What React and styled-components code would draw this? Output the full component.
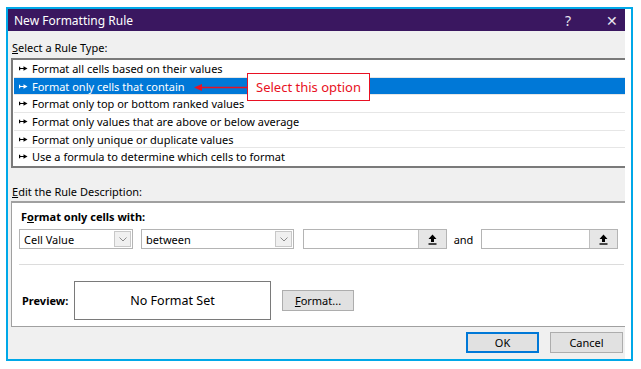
import React from 'react'
import styled, { createGlobalStyle } from 'styled-components'

const Global = createGlobalStyle`
  html, body {
    margin: 0;
    background: #ffffff;
  }
  body {
    font-family: "Noto Sans", "Open Sans", sans-serif;
    font-size: 11px;
    color: #000;
  }
`

const Frame = styled.div`
  margin: 7px 0 0 6px;
  width: 627px;
  height: 354px;
  box-sizing: border-box;
  border: 2px solid #00a8e8;
  display: flex;
`

const Dialog = styled.div`
  width: 617px;
  height: 100%;
  background: #f0f0f0;
  display: flex;
  flex-direction: column;
`

const TitleBar = styled.div`
  height: 22px;
  flex: none;
  background: #3a1760;
  color: #fff;
  display: flex;
  align-items: center;
  padding: 0 0 0 6px;
  font-size: 12px;
`

const Title = styled.span`
  flex: 1;
`

const TitleButton = styled.span`
  width: ${p => p.$w}px;
  margin-left: ${p => p.$ml || 0}px;
  text-align: center;
  font-size: 14px;
  color: #e8e4ee;
`

const Body = styled.div`
  flex: 1;
  display: flex;
  flex-direction: column;
  padding-left: 3px;
`

const Label = styled.div`
  height: 14px;
  line-height: 14px;
  padding-left: 1px;
  margin: ${p => p.$top}px 0 ${p => p.$bottom}px;
  u { text-decoration: underline; }
`

const ListBox = styled.div`
  height: 110px;
  box-sizing: border-box;
  border: 2px solid #7a7a7a;
  border-right: none;
  background: #fff;
  display: flex;
  flex-direction: column;
  padding-left: 1px;
  position: relative;
`

const Row = styled.div`
  flex: 1;
  display: flex;
  align-items: center;
  gap: 4px;
  padding-left: 5px;
  border-bottom: 1px solid ${p => (p.$last ? 'transparent' : '#e6e6e6')};
  background: ${p => (p.$selected ? '#0078d7' : 'transparent')};
  color: ${p => (p.$selected ? '#fff' : '#000')};
  white-space: nowrap;
`

const Callout = styled.div`
  position: absolute;
  left: 181px;
  top: 13px;
  display: flex;
  align-items: center;
`

const CalloutBox = styled.div`
  width: 123px;
  height: 28px;
  box-sizing: border-box;
  border: 1px solid #e81123;
  background: #fff;
  color: #e81123;
  font-size: 13px;
  display: flex;
  align-items: center;
  justify-content: center;
`

const DescBox = styled.div`
  height: 126px;
  box-sizing: border-box;
  border: 1px solid #a0a0a0;
  border-top: 2px solid #a0a0a0;
  border-right: none;
  background: #fff;
  display: flex;
  flex-direction: column;
`

const DescHead = styled.div`
  font-weight: bold;
  padding: 7px 0 0 9px;
  height: 14px;
  line-height: 14px;
  u { text-decoration: underline; }
`

const Controls = styled.div`
  display: flex;
  align-items: center;
  margin: 5px 0 0 7px;
  height: 20px;
  padding-bottom: 15px;
  border-bottom: 1px solid #dcdcdc;
  width: 605px;
`

const Combo = styled.div`
  width: ${p => p.$w}px;
  height: 20px;
  box-sizing: border-box;
  border: 1px solid #b4b4b4;
  background: #fff;
  display: flex;
  align-items: center;
  margin-right: ${p => p.$gap}px;
`

const ComboText = styled.span`
  flex: 1;
  padding-left: 4px;
`

const ComboButton = styled.span`
  width: 17px;
  height: 16px;
  margin-right: 1px;
  box-sizing: border-box;
  border: 1px solid #c8c8c8;
  background: #f0f0f0;
  display: flex;
  align-items: center;
  justify-content: center;
`

const RefButton = styled.span`
  width: 28px;
  height: 18px;
  box-sizing: border-box;
  border-left: 1px solid #c0c0c0;
  background: #e6e6e6;
  display: flex;
  align-items: center;
  justify-content: center;
`

const And = styled.span`
  width: 33px;
  text-align: center;
  margin-right: 1px;
`

const PreviewRow = styled.div`
  display: flex;
  align-items: center;
  padding: 16px 0 0 10px;
`

const PreviewLabel = styled.span`
  font-weight: bold;
  width: 52px;
`

const PreviewBox = styled.div`
  width: 197px;
  height: 39px;
  box-sizing: border-box;
  border: 1px solid #7a7a7a;
  display: flex;
  align-items: center;
  justify-content: center;
  font-size: 12.5px;
  margin-right: 11px;
`

const Button = styled.button`
  width: ${p => p.$w}px;
  height: 21px;
  box-sizing: border-box;
  border: 1px solid ${p => (p.$primary ? '#0078d7' : '#adadad')};
  box-shadow: ${p => (p.$primary ? 'inset 0 0 0 1px #0078d7' : 'none')};
  background: #e1e1e1;
  font-family: inherit;
  font-size: 11px;
  color: #000;
  padding: 0;
  u { text-decoration: underline; }
`

const Footer = styled.div`
  display: flex;
  justify-content: flex-end;
  gap: 11px;
  padding: 5px 2px 0 0;
`

const Pointer = () => (
  <svg width="9" height="7" viewBox="0 0 9 7">
    <path d="M0.6 1.8v3.4M0.6 3.5H5" stroke="currentColor" strokeWidth="1.2" />
    <path d="M4.5 1.2L8.5 3.5L4.5 5.8Z" fill="currentColor" />
  </svg>
)

const Chevron = () => (
  <svg width="8" height="5" viewBox="0 0 8 5">
    <path d="M0.5 0.5L4 4L7.5 0.5" stroke="#8a8a8a" strokeWidth="1" fill="none" />
  </svg>
)

const UpArrow = () => (
  <svg width="9" height="11" viewBox="0 0 9 11">
    <path d="M4.5 0.5L8.5 5H6V8H3V5H0.5Z" fill="#000" />
    <path d="M0.5 10H8.5" stroke="#000" strokeWidth="1.4" />
  </svg>
)

const CalloutArrow = () => (
  <svg width="53" height="9" viewBox="0 0 53 9">
    <path d="M6 4.5H53" stroke="#e81123" strokeWidth="1.6" />
    <path d="M0 4.5L8 1V8Z" fill="#e81123" />
  </svg>
)

const rules = [
  'Format all cells based on their values',
  'Format only cells that contain',
  'Format only top or bottom ranked values',
  'Format only values that are above or below average',
  'Format only unique or duplicate values',
  'Use a formula to determine which cells to format',
]

export default function App() {
  return (
    <>
      <Global />
      <Frame>
        <Dialog>
          <TitleBar>
            <Title>New Formatting Rule</Title>
            <TitleButton $w={44}>?</TitleButton>
            <TitleButton $w={26} $ml={9}>✕</TitleButton>
          </TitleBar>
          <Body>
            <Label $top={10} $bottom={3}><u>S</u>elect a Rule Type:</Label>
            <ListBox>
              {rules.map((r, i) => (
                <Row key={r} $selected={i === 1} $last={i === rules.length - 1}>
                  <Pointer />
                  {r}
                </Row>
              ))}
              <Callout>
                <CalloutArrow />
                <CalloutBox>Select this option</CalloutBox>
              </Callout>
            </ListBox>
            <Label $top={17} $bottom={2}><u>E</u>dit the Rule Description:</Label>
            <DescBox>
              <DescHead>F<u>o</u>rmat only cells with:</DescHead>
              <Controls>
                <Combo $w={114} $gap={8}>
                  <ComboText>Cell Value</ComboText>
                  <ComboButton><Chevron /></ComboButton>
                </Combo>
                <Combo $w={153} $gap={9}>
                  <ComboText>between</ComboText>
                  <ComboButton><Chevron /></ComboButton>
                </Combo>
                <Combo $w={144} $gap={0}>
                  <ComboText />
                  <RefButton><UpArrow /></RefButton>
                </Combo>
                <And>and</And>
                <Combo $w={137} $gap={0}>
                  <ComboText />
                  <RefButton><UpArrow /></RefButton>
                </Combo>
              </Controls>
              <PreviewRow>
                <PreviewLabel>Preview:</PreviewLabel>
                <PreviewBox>No Format Set</PreviewBox>
                <Button $w={72}><u>F</u>ormat...</Button>
              </PreviewRow>
            </DescBox>
            <Footer>
              <Button $w={73} $primary>OK</Button>
              <Button $w={73}>Cancel</Button>
            </Footer>
          </Body>
        </Dialog>
      </Frame>
    </>
  )
}
